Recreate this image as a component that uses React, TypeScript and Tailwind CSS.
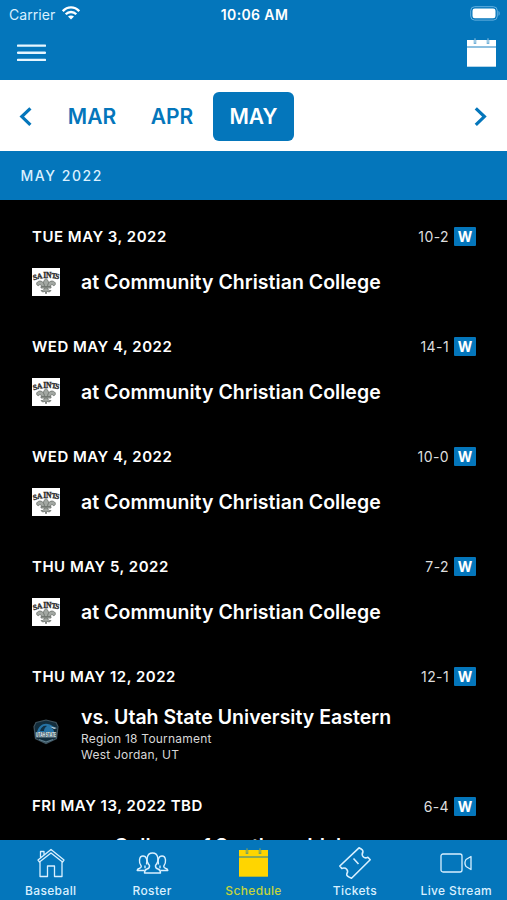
import type { ReactNode } from "react";

type Game = {
  date: string;
  score: string;
  title: string;
  team: "saints" | "utah" | "none";
  details?: string[];
};

const games: Game[] = [
  { date: "TUE MAY 3, 2022", score: "10-2", title: "at Community Christian College", team: "saints" },
  { date: "WED MAY 4, 2022", score: "14-1", title: "at Community Christian College", team: "saints" },
  { date: "WED MAY 4, 2022", score: "10-0", title: "at Community Christian College", team: "saints" },
  { date: "THU MAY 5, 2022", score: "7-2", title: "at Community Christian College", team: "saints" },
  {
    date: "THU MAY 12, 2022",
    score: "12-1",
    title: "vs. Utah State University Eastern",
    team: "utah",
    details: ["Region 18 Tournament", "West Jordan, UT"],
  },
  { date: "FRI MAY 13, 2022 TBD", score: "6-4", title: "vs. College of Southern Idaho", team: "none" },
];

function CalendarIcon({ className }: { className: string }) {
  return (
    <svg viewBox="0 0 29 29" className={className}>
      <path d="M0 2h29v26.700H0z" fill="currentColor" />
      <path d="M0 9h29" stroke="#0476bb" strokeWidth="1.200" opacity=".75" />
      <path d="M8 1.500v4.500M21 1.500v4.500" stroke="#0476bb" strokeWidth="2.600" opacity=".55" />
      <path d="M8 .3v4.400M21 .3v4.400" stroke="currentColor" strokeWidth="1" opacity=".6" />
    </svg>
  );
}

function SaintsLogo() {
  return (
    <svg viewBox="0 0 28 28" className="size-7 bg-white">
      <text
        x="1.500 5.300 11.200 14 19.200 22.800"
        y="12.300 11 10 10 10 10.600"
        rotate="-14 -8 0 0 4 10"
        fontSize="7.600"
        fontWeight="700"
        fontFamily="Liberation Serif, serif"
        fill="#2c2c2c"
        stroke="#2c2c2c"
        strokeWidth=".35"
      >
        SAINTS
      </text>
      <g fill="#a3a8a3" stroke="#6b706b" strokeWidth=".8">
        <path d="M14 10.500c-4 3.500-2.500 6-1 8.500h2c1.500-2.500 3-5-1-8.500z" />
        <path d="M12.500 19c0-5-4-7.500-7-5-1.800 1.500-.6 4 1.300 3.600 0-2 3-1 4 2zM15.500 19c0-5 4-7.500 7-5 1.800 1.500.6 4-1.300 3.600 0-2-3-1-4 2z" />
        <path d="M9 18.500h10v1.500H9z" />
        <path d="M12.500 20c-.5 2-2 3-3.500 2.500 1 2 3 1.500 4 .5l1 3 1-3c1 1 3 1.500 4-.5-1.500.5-3-.5-3.500-2.500z" />
      </g>
    </svg>
  );
}

function UtahLogo() {
  return (
    <svg viewBox="0 0 28 28" className="size-7">
      <path d="M4 4.500 14 2l10 2.500 2 4-1.500 12L14 25.500 3.500 20.500 2 8.500z" fill="#122c3b" stroke="#3f535e" strokeWidth="1.200" />
      <path d="M5 14C7 7 12 4 18 6.500l6 3.500-5-.5c2 1 3 3 3 4.500z" fill="#2673a5" />
      <path d="M8 13c1-4 4-6 7-5-2 1-3 3-3 5z" fill="#113044" />
      <path d="m18 8.500 7 1.500-3 1z" fill="#c6d7df" />
      <path d="M3 14.500h22v5.500H3z" fill="#435c69" />
      <text x="4" y="19.400" fontSize="5.800" fontWeight="800" fontFamily="Inter, sans-serif" fill="#dce7ec" textLength="20" lengthAdjust="spacingAndGlyphs">UTAH STATE</text>
      <path d="m7 21.500 7 2.500 7-2.500" fill="none" stroke="#5e7e8e" strokeWidth="1.200" />
    </svg>
  );
}

function GameRow({ game }: { game: Game }) {
  const bodyClass = game.details
    ? "mt-[17px] flex h-[70px]"
    : game.team === "none"
      ? "mt-[13px] flex h-8 items-center"
      : "mt-[19px] flex h-8 items-center";
  return (
    <li className={game.details ? "h-[129.500px] shrink-0 pt-[26px] pr-[31px] pl-8" : "h-[110px] shrink-0 pt-[26px] pr-[31px] pl-8"}>
      <div className="flex h-[21px] items-center justify-between">
        <span className="pt-px text-[15px] font-semibold tracking-[0.500px]">{game.date}</span>
        <span className="flex items-center gap-[5px]">
          <span className="text-[14px] tracking-[0.400px] text-[#dedede]">{game.score}</span>
          <span className="flex h-[19px] w-[22px] items-center justify-center rounded-[1px] bg-[#0476bb] text-[14px] font-bold">W</span>
        </span>
      </div>
      <div className={bodyClass}>
        <div className={game.details ? "mt-[14px] size-7 shrink-0" : "size-7 shrink-0"}>
          {game.team === "saints" && <SaintsLogo />}
          {game.team === "utah" && <UtahLogo />}
        </div>
        <div className="ml-[21px] whitespace-nowrap">
          <div className="text-[19.500px] leading-[26px] font-semibold tracking-[0.030px]">{game.title}</div>
          {game.details?.map((line) => (
            <div key={line} className="relative top-px text-[12px] leading-4 tracking-[0.220px] text-[#d8d8d8]">{line}</div>
          ))}
        </div>
      </div>
    </li>
  );
}

function Tab({ label, active, children }: { label: string; active?: boolean; children: ReactNode }) {
  return (
    <button className={active ? "flex flex-1 flex-col items-center pt-[7px] text-[#ffd500]" : "flex flex-1 flex-col items-center pt-[7px] text-[#d9f0ff]"}>
      <span className="flex h-8 items-center justify-center">{children}</span>
      <span className={active ? "mt-1 text-[12px] leading-4 font-medium tracking-[0.350px] whitespace-nowrap text-[#c4d43c]" : "mt-1 text-[12px] leading-4 font-medium tracking-[0.350px] whitespace-nowrap"}>{label}</span>
    </button>
  );
}

export default function App() {
  return (
    <main className="flex h-[900px] w-[507px] flex-col overflow-hidden bg-black font-['Inter',sans-serif] text-white">
      <header className="h-20 shrink-0 bg-[#0476bb]">
        <div className="grid h-7 grid-cols-3 items-center pr-[7px] pl-[9px]">
          <div className="flex items-center gap-[7px] text-[14px] tracking-[0.050px] text-[#d9f0ff]">
            Carrier
            <svg viewBox="0 0 18 14" className="mt-[-2px] h-[14px] w-[18px]" fill="none" stroke="white" strokeWidth="2.300">
              <path d="M.8 5.200C5.500.2 12.500.2 17.200 5.200M3.700 8.300c3-3.100 7.600-3.100 10.600 0" />
              <path d="m9 13.600-3-3c1.600-1.500 4.400-1.500 6 0z" fill="white" stroke="none" />
            </svg>
          </div>
          <div className="text-center text-[14px] font-semibold tracking-[0.380px]">10:06 AM</div>
          <svg viewBox="0 0 30 15" className="mt-[-1px] h-[15px] w-[30px] justify-self-end">
            <rect x=".7" y=".7" width="26.600" height="13.400" rx="4" fill="none" stroke="#65b1e0" strokeWidth="1" />
            <rect x="2.500" y="2.500" width="23" height="9.800" rx="2.300" fill="white" />
            <path d="M28.500 5c1.600.6 1.600 4.200 0 4.800z" fill="#65b1e0" />
          </svg>
        </div>
        <div className="flex h-[52px] items-start justify-between pr-[11px] pl-[17px]">
          <svg viewBox="0 0 29 19" className="mt-[16px] h-[19px] w-[29px]" stroke="#e6f6ff" strokeWidth="2.400" strokeLinecap="round">
            <path d="M1 1.600h27M1 8.700h27M1 15.900h27" />
          </svg>
          <CalendarIcon className="mt-[10px] size-[29px] text-white" />
        </div>
      </header>

      <nav className="flex h-[71px] shrink-0 items-center bg-white pt-[2px] pr-[20px] pl-[19px] text-[21px] font-semibold text-[#0476bb]">
        <svg viewBox="0 0 14 20" className="h-5 w-[14px]" fill="none" stroke="currentColor" strokeWidth="3.200"><path d="m11.400 1.300-8.600 8.300 8.600 8.300" /></svg>
        <button className="ml-[27px] flex h-[49px] w-[64px] items-center justify-center">MAR</button>
        <button className="ml-[16px] flex h-[49px] w-[64px] items-center justify-center">APR</button>
        <button className="ml-[9px] flex h-[49px] w-[81px] items-center justify-center rounded-[6px] bg-[#0476bb] text-white">MAY</button>
        <svg viewBox="0 0 14 20" className="ml-auto h-5 w-[14px]" fill="none" stroke="currentColor" strokeWidth="3.200"><path d="m2.800 1.300 8.600 8.300-8.600 8.300" /></svg>
      </nav>
      <h2 className="flex h-[49px] shrink-0 items-center bg-[#0476bb] pl-[20.500px] text-[14px] font-medium tracking-[1.550px] text-[#d9f0ff]">MAY 2022</h2>

      <ul className="flex min-h-0 flex-1 flex-col overflow-hidden">
        {games.map((game, i) => <GameRow key={i} game={game} />)}
      </ul>

      <nav className="flex h-[60px] shrink-0 bg-[#0476bb]">
        <Tab label="Baseball">
          <svg viewBox="0 0 28 30" className="h-[30px] w-7" fill="none" stroke="currentColor" strokeWidth="1.300" strokeLinejoin="round">
            <path d="M3 14v14.500h7.500V18h7v10.500H25V14M3.500 10V3.500H7V7M1 12 14 1.500 27 12l-1.500 2L14 5 2.500 14z" />
          </svg>
        </Tab>
        <Tab label="Roster">
          <svg viewBox="0 0 33 22" className="mt-[-1px] h-[22px] w-[33px]" fill="none" stroke="currentColor" strokeWidth="1.400" strokeLinejoin="round">
            <path d="M13.500 13.500c-3.700-4-3.300-12.500 3-12.500s6.700 8.500 3 12.500c-.3 2.500.5 3 2.500 3.500 1.700.5 2.500 1.500 2.500 4h-16c0-2.500.8-3.500 2.500-4 2-.5 2.800-1 2.500-3.500z" />
            <path d="M10.500 12.500c1-4 .2-8.500-3.500-8.500-4.200 0-4.500 7-1.800 10 .3 1.500-.7 2-2.200 2.500-1.300.4-1.800 1-1.800 2H8.500M22.500 12.500c-1-4-.2-8.500 3.500-8.500 4.200 0 4.500 7 1.800 10-.3 1.500.7 2 2.200 2.500 1.300.4 1.800 1 1.800 2h-7.300M9 13.500v2.700M24 13.500v2.700" />
          </svg>
        </Tab>
        <Tab label="Schedule" active><CalendarIcon className="mt-[-1px] size-[29px]" /></Tab>
        <Tab label="Tickets">
          <svg viewBox="0 0 34 34" className="mt-[-1px] h-[34px] w-[34px] shrink-0" fill="none" stroke="currentColor" strokeWidth="1.600" strokeLinejoin="round">
            <path d="M21 1.800 1.800 20l2 2.400c4.200-1.500 7.200 1.800 5 5.400-.7 1.700 1.200 3 4.700 4.400l18.700-18.500-2.300-2.500c-3.800 2-7-1.500-5-5.200.5-1.500-1-2.700-3.900-4.200zM15.500 12.500l5 5.500" />
          </svg>
        </Tab>
        <Tab label="Live Stream">
          <svg viewBox="0 0 32 20" className="h-5 w-8" fill="none" stroke="currentColor" strokeWidth="1.300" strokeLinejoin="round">
            <rect x="1" y="1" width="21" height="18" rx="2" /><path d="M31 3.500v13l-5-3c-1.200-2-1.200-5 0-7z" />
          </svg>
        </Tab>
      </nav>
    </main>
  );
}
